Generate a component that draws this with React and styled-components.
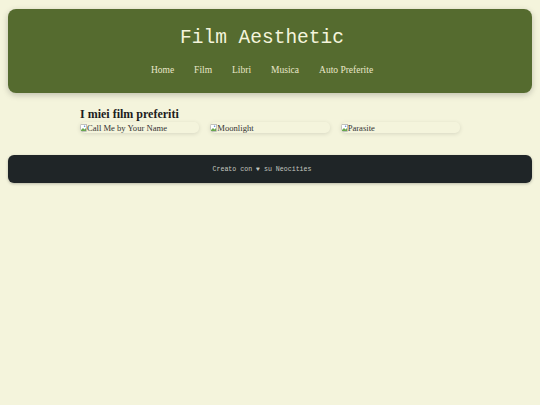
import React from 'react';
import styled, { createGlobalStyle } from 'styled-components';

const Global = createGlobalStyle`
  html, body {
    margin: 0;
    background: #f4f4dc;
  }
  body {
    padding: 8px;
    font-family: "Liberation Serif", serif;
    color: #222;
  }
`;

const Header = styled.header`
  background: #556b2f;
  border-radius: 8px;
  box-shadow: 0 2px 6px rgba(0, 0, 0, 0.22);
  padding: 16px 16px 16px 0;
  margin-top: 1px;
  text-align: center;
`;

const Title = styled.h1`
  margin: 0;
  font-family: "Liberation Mono", "DejaVu Sans Mono", monospace;
  font-weight: 400;
  font-size: 19.5px;
  line-height: 26px;
  color: #f4f4dc;
`;

const Nav = styled.nav`
  display: flex;
  justify-content: center;
  margin-top: 12px;
`;

const NavLink = styled.a`
  padding: 0 10px;
  font-family: "Liberation Serif", serif;
  font-size: 9.5px;
  line-height: 14px;
  color: #e9e7c9;
  text-decoration: none;
`;

const Main = styled.main`
  max-width: 380px;
  margin: 14px auto 0;
  padding-bottom: 22px;
`;

const Heading = styled.h2`
  margin: 0 0 1px;
  font-family: "Liberation Serif", serif;
  font-size: 12px;
  line-height: 14px;
  font-weight: 700;
  color: #1d1d1d;
`;

const Grid = styled.div`
  display: grid;
  grid-template-columns: repeat(3, 1fr);
  gap: 11px;
`;

const Card = styled.div`
  display: flex;
  align-items: center;
  height: 11px;
  border-radius: 5px;
  box-shadow: 0 1px 4px rgba(0, 0, 0, 0.12);
  font-family: "Liberation Serif", serif;
  font-size: 8.6px;
  color: #333;
  overflow: hidden;
  white-space: nowrap;
`;

const Footer = styled.footer`
  background: #1f2527;
  border-radius: 6px;
  box-shadow: 0 1px 3px rgba(0, 0, 0, 0.25);
  height: 28px;
  padding-right: 16px;
  display: flex;
  align-items: center;
  justify-content: center;
  font-family: "Liberation Mono", "DejaVu Sans Mono", monospace;
  font-size: 6.6px;
  color: #c4c7c0;
`;

function BrokenIcon() {
  return (
    <svg width="7" height="8" viewBox="0 0 7 8">
      <rect x="0.5" y="0.5" width="6" height="7" fill="#fff" stroke="#9a9a9a" strokeWidth="0.6" />
      <path d="M1 6 L3 4 L4.5 5.5 L6 4 L6 7 L1 7 Z" fill="#6aa84f" />
      <circle cx="4.6" cy="2.3" r="0.8" fill="#5a8fd6" />
    </svg>
  );
}

function Movie(props) {
  return (
    <Card>
      <BrokenIcon />
      {props.title}
    </Card>
  );
}

const links = ['Home', 'Film', 'Libri', 'Musica', 'Auto Preferite'];
const films = ['Call Me by Your Name', 'Moonlight', 'Parasite'];

export default function App() {
  return (
    <>
      <Global />
      <Header>
        <Title>Film Aesthetic</Title>
        <Nav>
          {links.map((l) => (
            <NavLink key={l} href="#">{l}</NavLink>
          ))}
        </Nav>
      </Header>
      <Main>
        <Heading>I miei film preferiti</Heading>
        <Grid>
          {films.map((f) => (
            <Movie key={f} title={f} />
          ))}
        </Grid>
      </Main>
      <Footer>Creato con ♥ su Neocities</Footer>
    </>
  );
}
